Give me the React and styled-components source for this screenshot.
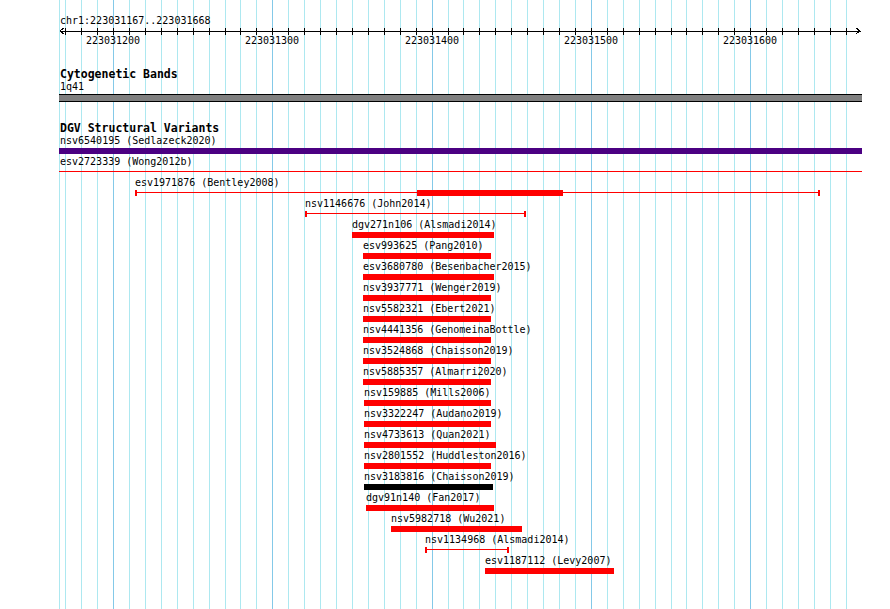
import React from "react";
import styled, { createGlobalStyle } from "styled-components";

// genomic -> screen mapping for the visible block
const ORIGIN = 223031200;
const ORIGIN_PX = 54;
const PX_PER_BP = 1.593;
const VIEW_WIDTH = 803;

const toPx = (bp) => Math.round(ORIGIN_PX + (bp - ORIGIN) * PX_PER_BP);

const gridlines = [];
for (let bp = 223031170; bp <= 223031660; bp += 10) {
    gridlines.push({ bp, x: toPx(bp), major: bp % 100 === 0 });
}

const RED = "#ff0000";

const variants = [
    { name: "nsv6540195", study: "Sedlazeck2020", start: 223031000, end: 223031900, type: "box", color: "#4b0082" },
    { name: "esv2723339", study: "Wong2012b", start: 223031000, end: 223031900, type: "line", color: RED },
    { name: "esv1971876", study: "Bentley2008", start: 223031214, end: 223031644, type: "line", color: RED, thick: [223031391, 223031482.5] },
    { name: "nsv1146676", study: "John2014", start: 223031320.5, end: 223031459.3, type: "line", color: RED },
    { name: "dgv271n106", study: "Alsmadi2014", start: 223031350, end: 223031439, type: "box", color: RED },
    { name: "esv993625", study: "Pang2010", start: 223031357, end: 223031437, type: "box", color: RED },
    { name: "esv3680780", study: "Besenbacher2015", start: 223031357, end: 223031439, type: "box", color: RED },
    { name: "nsv3937771", study: "Wenger2019", start: 223031357, end: 223031437.5, type: "box", color: RED },
    { name: "nsv5582321", study: "Ebert2021", start: 223031357, end: 223031437, type: "box", color: RED },
    { name: "nsv4441356", study: "GenomeinaBottle", start: 223031357, end: 223031437.5, type: "box", color: RED },
    { name: "nsv3524868", study: "Chaisson2019", start: 223031357, end: 223031437.5, type: "box", color: RED },
    { name: "nsv5885357", study: "Almarri2020", start: 223031357, end: 223031437, type: "box", color: RED },
    { name: "nsv159885", study: "Mills2006", start: 223031357.6, end: 223031437.5, type: "box", color: RED },
    { name: "nsv3322247", study: "Audano2019", start: 223031357.6, end: 223031437.5, type: "box", color: RED },
    { name: "nsv4733613", study: "Quan2021", start: 223031357.6, end: 223031440.5, type: "box", color: RED },
    { name: "nsv2801552", study: "Huddleston2016", start: 223031357.6, end: 223031437.5, type: "box", color: RED },
    { name: "nsv3183816", study: "Chaisson2019", start: 223031357.6, end: 223031438.5, type: "box", color: "#000000" },
    { name: "dgv91n140", study: "Fan2017", start: 223031358.8, end: 223031439.2, type: "box", color: RED },
    { name: "nsv5982718", study: "Wu2021", start: 223031374.5, end: 223031456.7, type: "box", color: RED },
    { name: "nsv1134968", study: "Alsmadi2014", start: 223031396, end: 223031448.6, type: "line", color: RED },
    { name: "esv1187112", study: "Levy2007", start: 223031433.5, end: 223031514.6, type: "box", color: RED },
];

const GlobalStyle = createGlobalStyle`
    html, body {
        margin: 0;
        padding: 0;
        background: #ffffff;
    }
    body {
        font-family: "DejaVu Sans Mono", "Liberation Mono", monospace;
        font-size: 10px;
        color: #000;
    }
`;

export default function App() {
    return (
        <Page>
            <GlobalStyle />
            <Grid>
                <GridLine style={{ left: 0 }} />
                {gridlines.map((g) => (
                    <GridLine key={g.bp} major={g.major} style={{ left: g.x }} />
                ))}
            </Grid>
            <Tracks>
                <Ruler>
                    <RefLabel>chr1:223031167..223031668</RefLabel>
                    <Axis width={VIEW_WIDTH} height="7" shapeRendering="crispEdges">
                        <rect x="1" y="3" width="801" height="1" fill="#000" />
                        {gridlines.map((g) => (
                            <rect key={g.bp} x={g.x} y="0" width="1" height="7" fill="#000" />
                        ))}
                        <polyline points="5,0 1,3 5,6" fill="none" stroke="#000" strokeWidth="1" />
                        <polyline points="797,0 801,3 797,6" fill="none" stroke="#000" strokeWidth="1" />
                    </Axis>
                    <TickLabels>
                        {gridlines.filter((g) => g.major).map((g) => (
                            <TickLabel key={g.bp} style={{ left: g.x }}>{g.bp}</TickLabel>
                        ))}
                    </TickLabels>
                </Ruler>

                <Track gap={20}>
                    <TrackTitle>Cytogenetic Bands</TrackTitle>
                    <Label>1q41</Label>
                    <Band />
                </Track>

                <Track gap={19}>
                    <TrackTitle>DGV Structural Variants</TrackTitle>
                    {variants.map((v, i) => (
                        <Variant key={i} v={v} />
                    ))}
                </Track>
            </Tracks>
        </Page>
    );
}

const Variant = ({ v }) => {
    const rawLeft = toPx(v.start);
    const rawRight = toPx(v.end);
    const left = Math.max(0, rawLeft);
    const right = Math.min(VIEW_WIDTH, rawRight);
    return (
        <Row>
            <RowLabel style={{ paddingLeft: Math.max(1, rawLeft) }}>
                {v.name} ({v.study})
            </RowLabel>
            <GlyphArea>
                {v.type === "box" ? (
                    <Box color={v.color} style={{ left, width: right - left }} />
                ) : (
                    <>
                        <Span color={v.color} style={{ left, width: right - left }} />
                        {rawLeft >= 0 && <Cap color={v.color} style={{ left: rawLeft }} />}
                        {rawRight <= VIEW_WIDTH && <Cap color={v.color} style={{ left: rawRight - 2 }} />}
                        {v.thick && (
                            <Box
                                color={v.color}
                                style={{ left: toPx(v.thick[0]), width: toPx(v.thick[1]) - toPx(v.thick[0]) }}
                            />
                        )}
                    </>
                )}
            </GlyphArea>
        </Row>
    );
};

const Page = styled.div`
    position: relative;
    width: 890px;
    height: 609px;
    overflow: hidden;
    background: #fff;
`;

const Grid = styled.div`
    position: absolute;
    top: 0;
    left: 59px;
    width: 803px;
    height: 100%;
`;

const GridLine = styled.div`
    position: absolute;
    top: 0;
    bottom: 0;
    width: 1px;
    background: ${({ major }) => (major ? "#84c9e8" : "#ade8f0")};
`;

const Tracks = styled.div`
    position: relative;
    z-index: 1;
    margin-left: 59px;
    width: 803px;
`;

const Ruler = styled.div`
    display: flex;
    flex-direction: column;
`;

const RefLabel = styled.div`
    margin-top: 15px;
    padding-left: 1px;
    line-height: 12px;
    white-space: nowrap;
`;

const Axis = styled.svg`
    display: block;
    margin-top: 1px;
`;

const TickLabels = styled.div`
    position: relative;
    height: 12px;
`;

const TickLabel = styled.span`
    position: absolute;
    top: 0;
    line-height: 12px;
    transform: translateX(-50%);
    white-space: nowrap;
`;

const Track = styled.div`
    display: flex;
    flex-direction: column;
    margin-top: ${({ gap }) => gap}px;
`;

const TrackTitle = styled.div`
    padding-left: 1px;
    font-size: 11.5px;
    font-weight: bold;
    line-height: 14px;
    white-space: nowrap;
`;

const Label = styled.div`
    padding-left: 1px;
    line-height: 12px;
`;

const Band = styled.div`
    margin-top: 1px;
    height: 8px;
    box-sizing: border-box;
    border-top: 1px solid #000;
    border-bottom: 1px solid #000;
    background: #808080;
`;

const Row = styled.div`
    height: 21px;
`;

const RowLabel = styled.div`
    line-height: 12px;
    white-space: nowrap;
`;

const GlyphArea = styled.div`
    position: relative;
    margin-top: 1px;
    height: 6px;
`;

const Box = styled.div`
    position: absolute;
    top: 0;
    height: 6px;
    background: ${({ color }) => color};
`;

const Span = styled.div`
    position: absolute;
    top: 2px;
    height: 1px;
    background: ${({ color }) => color};
`;

const Cap = styled.div`
    position: absolute;
    top: 0;
    width: 2px;
    height: 6px;
    background: ${({ color }) => color};
`;
